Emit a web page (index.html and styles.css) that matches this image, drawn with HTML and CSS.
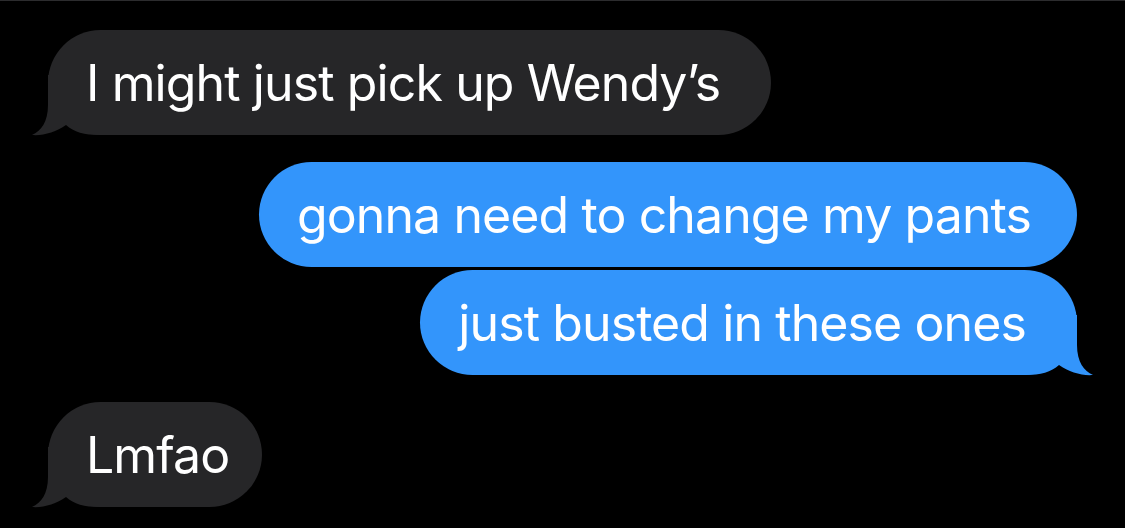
FILE: index.html
```html
<!DOCTYPE html>
<html lang="en">
<head>
<meta charset="utf-8">
<title>Messages</title>
<link rel="stylesheet" href="styles.css">
</head>
<body>
<main class="thread">
  <div class="bubble recv tail">
    <span class="text">I might just pick up Wendy’s</span>
    <svg class="tail-svg tail-left" viewBox="-16 -60 76 60" width="76" height="60" aria-hidden="true">
      <path d="M0,-60 L0,-30 C0,-13 -7,-4 -16,0 C-5,1 8,-3 18,-10 C26,-3 36,0 52,0 L60,0 L60,-60 Z"/>
    </svg>
  </div>
  <div class="group sent-group">
    <div class="bubble sent mid">
      <span class="text">gonna need to change my pants</span>
    </div>
    <div class="bubble sent tail">
      <span class="text">just busted in these ones</span>
      <svg class="tail-svg tail-right" viewBox="-60 -60 76 60" width="76" height="60" aria-hidden="true">
        <path d="M0,-60 L0,-30 C0,-13 7,-4 16,0 C5,1 -8,-3 -18,-10 C-26,-3 -36,0 -52,0 L-60,0 L-60,-60 Z"/>
      </svg>
    </div>
  </div>
  <div class="bubble recv tail short">
    <span class="text">Lmfao</span>
    <svg class="tail-svg tail-left" viewBox="-16 -60 76 60" width="76" height="60" aria-hidden="true">
      <path d="M0,-60 L0,-30 C0,-13 -7,-4 -16,0 C-5,1 8,-3 18,-10 C26,-3 36,0 52,0 L60,0 L60,-60 Z"/>
    </svg>
  </div>
</main>
</body>
</html>
```

FILE: styles.css
```css
html, body {
  margin: 0;
  padding: 0;
  background: #000;
}

body {
  width: 1125px;
  height: 528px;
  overflow: hidden;
  border-top: 1px solid #2c2c2e;
  box-sizing: border-box;
  font-family: Inter, "Noto Sans", "Liberation Sans", sans-serif;
}

.thread {
  display: flex;
  flex-direction: column;
  gap: 27px;
  padding: 29px 48px 0 48px;
}

.group {
  display: flex;
  flex-direction: column;
  gap: 3px;
}

.sent-group {
  align-items: flex-end;
}

.bubble {
  position: relative;
  height: 105px;
  display: flex;
  align-items: center;
  padding: 0 51px 0 38px;
  border-radius: 53px;
  box-sizing: border-box;
  color: #fff;
  font-size: 50px;
  letter-spacing: -0.9px;
  white-space: nowrap;
}

.bubble.mid {
  padding-right: 46px;
}

.bubble.short {
  padding-right: 33px;
}

.recv {
  align-self: flex-start;
  background: #262628;
}

.sent {
  background: #3395fb;
}

.text {
  position: relative;
  z-index: 1;
  line-height: 1;
}

.tail-svg {
  position: absolute;
  bottom: 0;
  overflow: visible;
}

.tail-left {
  left: -16px;
  fill: #262628;
}

.tail-right {
  right: -16px;
  fill: #3395fb;
}
```
